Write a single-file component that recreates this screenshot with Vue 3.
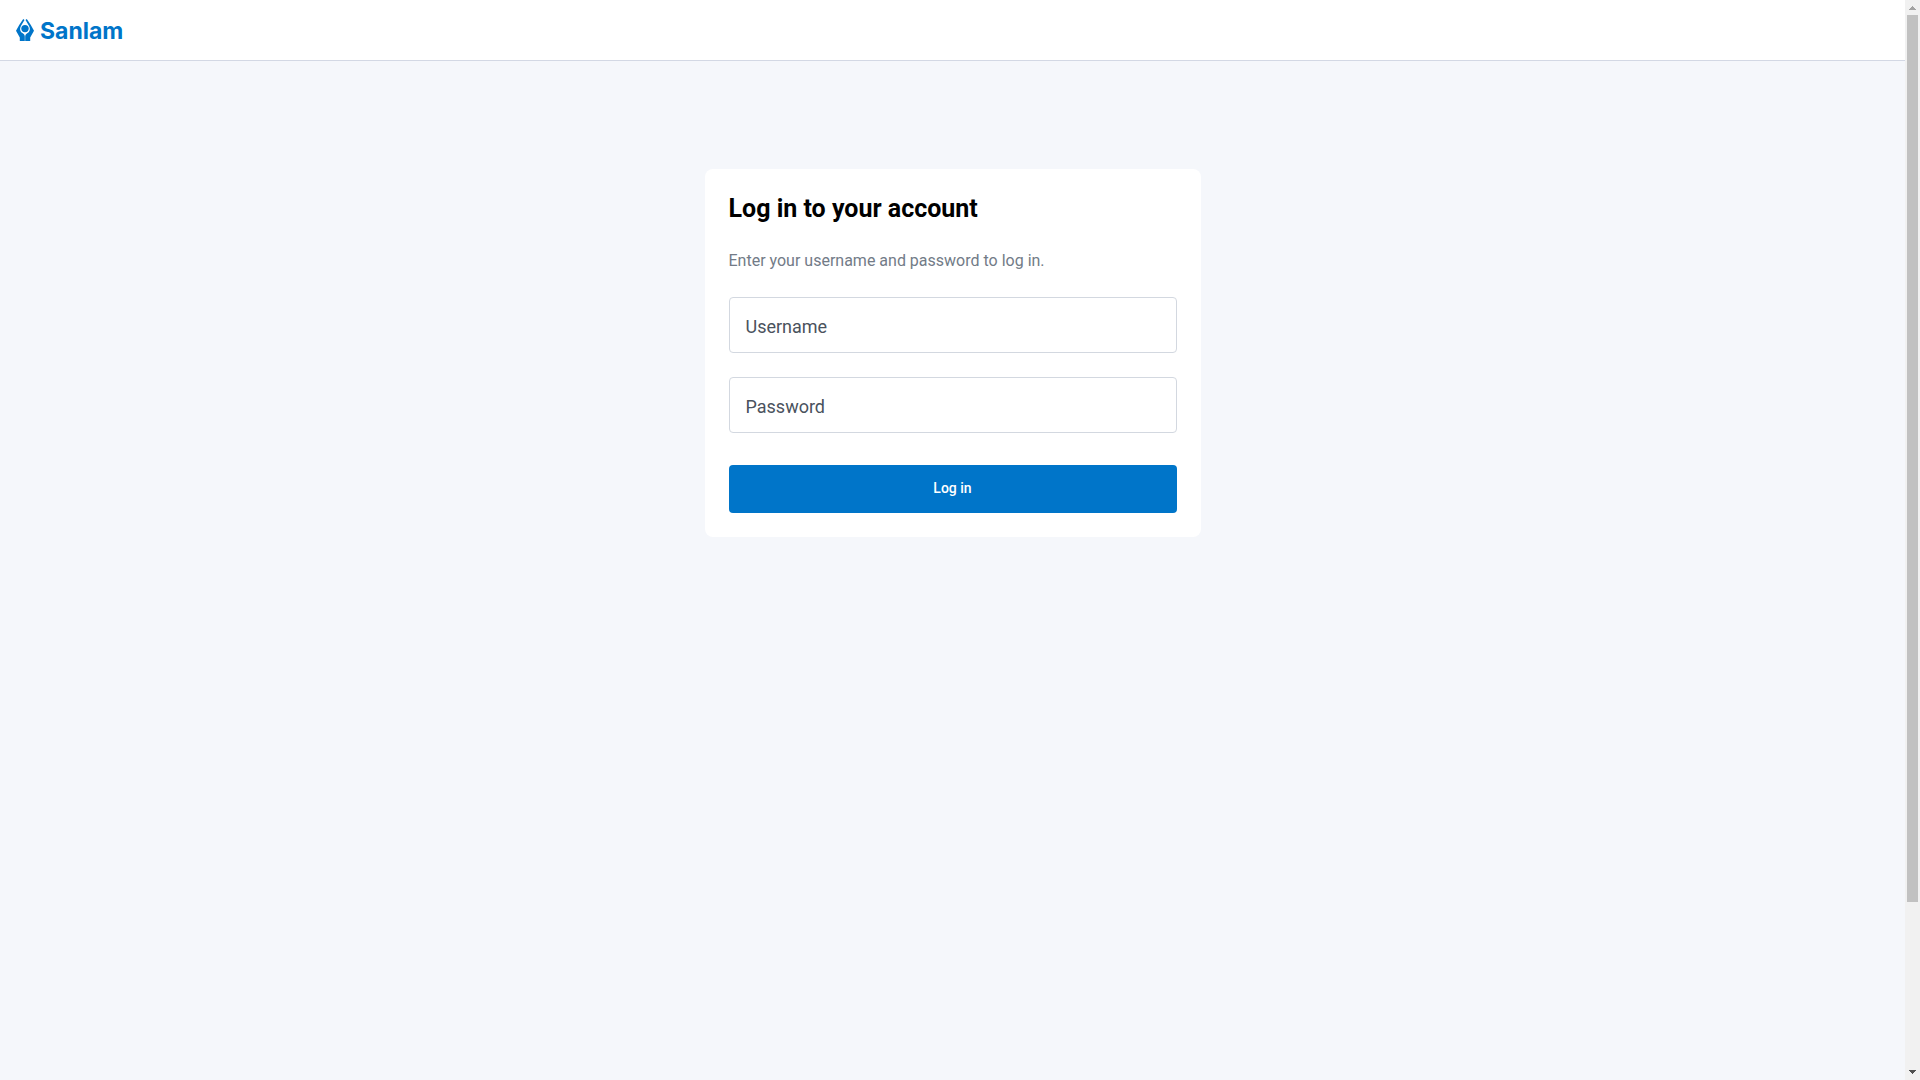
<script setup>
import { ref } from 'vue'

const username = ref('')
const password = ref('')
</script>

<template>
  <div class="shell">
    <div class="page">
      <header class="topbar">
        <a class="brand" href="#" aria-label="Sanlam">
          <svg class="mark" viewBox="0 0 18 22" aria-hidden="true">
            <circle cx="9" cy="9.6" r="3.7" />
            <path d="M7.2 0 L8.5 1 L5.2 6.4 C3.4 9.6 4 12.4 6.4 14 C8 15 8.8 16 8.8 17.6 L8.8 22 L3.8 22 L3.8 18.6 L0 11.8 L3.2 6 Z" />
            <path d="M10.8 0 L9.5 1 L12.8 6.4 C14.6 9.6 14 12.4 11.6 14 C10 15 9.2 16 9.2 17.6 L9.2 22 L14.2 22 L14.2 18.6 L18 11.8 L14.8 6 Z" />
          </svg>
          <span class="name">Sanlam</span>
        </a>
      </header>
      <main class="content">
        <form class="card" @submit.prevent>
          <h1>Log in to your account</h1>
          <p>Enter your username and password to log in.</p>
          <div class="field">
            <input id="username" v-model="username" type="text" placeholder=" " autocomplete="username" />
            <label for="username">Username</label>
          </div>
          <div class="field">
            <input id="password" v-model="password" type="password" placeholder=" " autocomplete="current-password" />
            <label for="password">Password</label>
          </div>
          <button type="submit">Log in</button>
        </form>
      </main>
    </div>
    <div class="scrollbar" aria-hidden="true">
      <svg viewBox="0 0 15 15"><path d="M7 6h1v1h1v1h1v1h1v1H4V9h1V8h1V7h1z" fill="#a3a3a3" /></svg>
      <div class="track"><div class="thumb"></div></div>
      <svg viewBox="0 0 15 15"><path d="M4 5h7v1h-1v1H9v1H8v1H7V8H6V7H5V6H4z" fill="#505050" /></svg>
    </div>
  </div>
</template>

<style>
body {
  margin: 0;
  background: #f5f7fb;
}
</style>

<style scoped>
* {
  box-sizing: border-box;
}

.shell {
  display: flex;
  min-height: 100vh;
  font-family: Roboto, sans-serif;
}

.page {
  flex: 1;
  min-width: 0;
  background: #f5f7fb;
}

.topbar {
  display: flex;
  align-items: center;
  height: 61px;
  padding: 0 16px;
  background: #fff;
  border-bottom: 1px solid #d3d8e4;
}

.brand {
  display: flex;
  align-items: center;
  gap: 6px;
  color: #0075c9;
  text-decoration: none;
}

.mark {
  width: 18px;
  height: 22px;
  fill: currentColor;
}

.name {
  padding-top: 2px;
  font: 700 23px/28px Inter, "Liberation Sans", sans-serif;
}

.content {
  display: flex;
  justify-content: center;
  padding: 108px 16px;
}

.card {
  display: flex;
  flex-direction: column;
  width: 100%;
  max-width: 496px;
  padding: 24px;
  background: #fff;
  border-radius: 8px;
}

h1 {
  margin: 0 0 24px;
  font-size: 25px;
  font-weight: 700;
  line-height: 32px;
  color: #000;
}

p {
  margin: 0 0 24px;
  font-size: 16px;
  line-height: 24px;
  color: #727b87;
}

.field {
  position: relative;
  margin-bottom: 24px;
}

.field input {
  display: block;
  width: 100%;
  height: 56px;
  padding: 16px 16px 12px;
  font: 18px/24px Roboto, sans-serif;
  color: #454d58;
  background: #fff;
  border: 1px solid #d3d8e0;
  border-radius: 4px;
}

.field label {
  position: absolute;
  top: 18px;
  left: 17px;
  font-size: 18px;
  line-height: 24px;
  color: #4a525d;
  pointer-events: none;
}

.field input:not(:placeholder-shown) + label {
  top: 4px;
  font-size: 12px;
  line-height: 16px;
}

button {
  height: 48px;
  margin-top: 8px;
  padding: 0 16px 2px;
  font: 500 14px/20px Roboto, sans-serif;
  color: #fff;
  background: #0075c9;
  border: 0;
  border-radius: 4px;
  cursor: pointer;
}

.scrollbar {
  position: sticky;
  top: 0;
  display: flex;
  flex-direction: column;
  width: 15px;
  height: 100vh;
  background: #f1f1f1;
}

.scrollbar svg {
  width: 15px;
  height: 15px;
  shape-rendering: crispEdges;
}

.track {
  flex: 1;
  padding: 0 2px;
}

.thumb {
  height: 84.5%;
  background: #c1c1c1;
}
</style>
